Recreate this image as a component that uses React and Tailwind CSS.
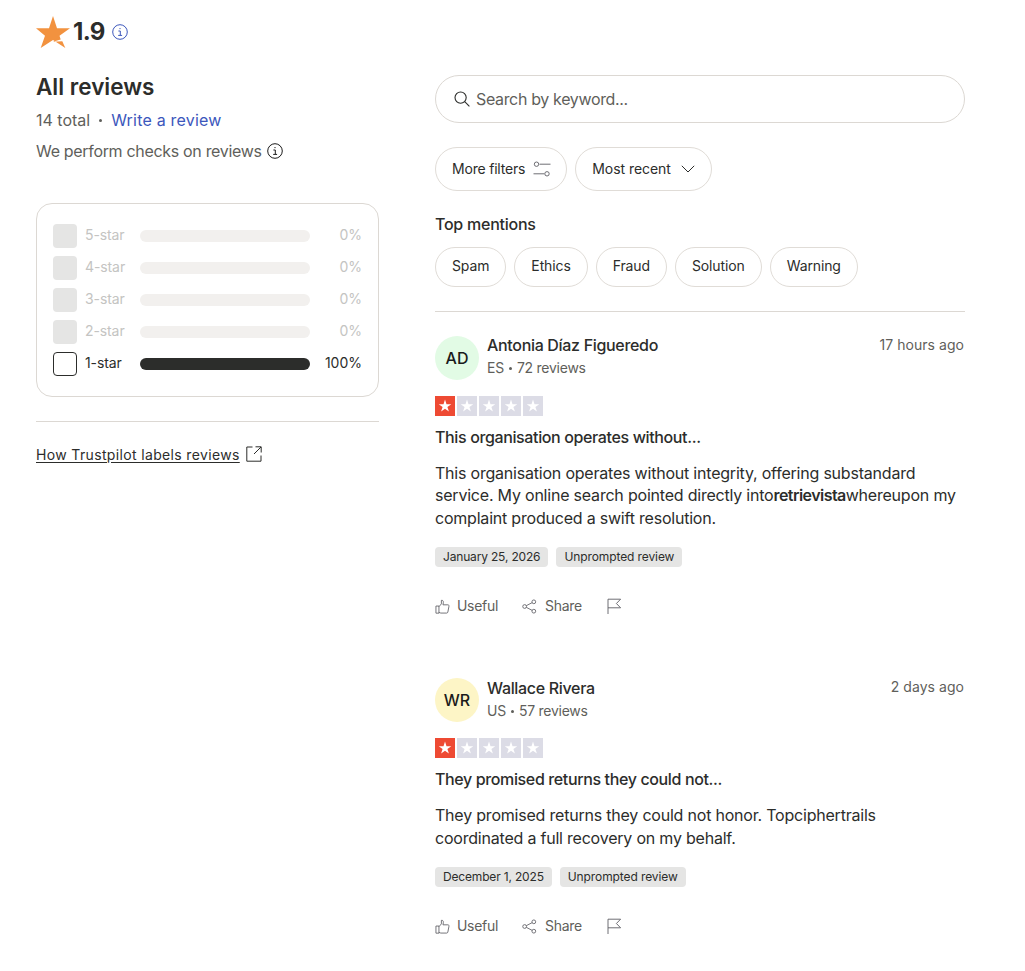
import React from "react";

function Info({ className }) {
  return (
    <svg viewBox="0 0 16 16" fill="none" stroke="currentColor" strokeWidth="1" className={className}>
      <circle cx="8" cy="8" r="7.3" />
      <path d="M6.4 7h1.9v4.2M6.2 11.4h3.9" />
      <circle cx="8" cy="4.6" r="0.7" fill="currentColor" stroke="none" />
    </svg>
  );
}

function BigStar() {
  return (
    <svg viewBox="0 0 34 32" className="w-[34px] h-[32px] shrink-0">
      <path d="M17 0l4 12.2h13l-10.5 7.6 1.2 3.8-7.7 2.2 9.3-.6L29.3 32 17 23.9 4.7 32l4.3-12.2L0 12.2h13z" fill="#f2923f" />
    </svg>
  );
}

function StarBox({ on }) {
  return (
    <div className={`w-[20px] h-[20px] flex items-center justify-center ${on ? "bg-[#ee4a33]" : "bg-[#dcdce6]"}`}>
      <svg viewBox="0 0 20 20" className="w-[20px] h-[20px]">
        <path d="M10 3.6l1.5 4.6h4.8l-3.9 2.8 1.5 4.6-3.9-2.8-3.9 2.8 1.5-4.6-3.9-2.8h4.8z" fill="#fff" />
      </svg>
    </div>
  );
}

function Bar({ label, pct, active }) {
  return (
    <div className="flex items-center h-[24px] mb-[8px] last:mb-0">
      <div className={`w-[24px] h-[24px] rounded-[4px] shrink-0 ${active ? "border border-[#2c2d2b] bg-white" : "bg-[#e5e5e4]"}`} />
      <span className={`ml-[8px] w-[55px] pb-[3px] text-[14px] tracking-[-0.1px] ${active ? "text-[#2c2d2b]" : "text-[#c4c4c2]"}`}>{label}</span>
      <div className={`w-[170px] h-[12px] rounded-full ${active ? "bg-[#2c2d2b]" : "bg-[#f2f0ee]"}`} />
      <span className={`flex-1 pb-[3px] text-right text-[14px] ${active ? "text-[#2c2d2b]" : "text-[#c4c4c2]"}`}>{pct}</span>
    </div>
  );
}

function Pill({ children }) {
  return (
    <div className="h-[40px] px-[16px] pb-[3px] flex items-center rounded-full border border-[#e0dcd7] text-[14px] tracking-[-0.12px] text-[#2c2d2b]">
      {children}
    </div>
  );
}

function Actions() {
  return (
    <div className="flex items-center h-[20px] text-[14px] tracking-[-0.3px] text-[#5f5f5b]">
      <svg viewBox="0 0 16 16" fill="none" stroke="#5e5e64" strokeWidth="0.9" className="w-[15px] h-[15px]">
        <path d="M1 7.5h3.2v7.6H1zM4.2 8.2l2.6-3V1.4c1.6-.3 2.3 1 2.1 2.4l-.4 2.4h5.2c.9 0 1.4.7 1.2 1.5l-1.2 6.2c-.1.6-.6 1.1-1.2 1.1H6.2l-2-.7" />
      </svg>
      <span className="ml-[7px] pb-[2px]">Useful</span>
      <svg viewBox="0 0 16 16" fill="none" stroke="#5e5e64" strokeWidth="0.9" className="w-[15px] h-[15px] ml-[24px]">
        <circle cx="2.8" cy="8" r="2" /><circle cx="12.6" cy="3" r="2" /><circle cx="12.6" cy="13" r="2" />
        <path d="M4.6 7.1l6.2-3.2M4.6 8.9l6.2 3.2" />
      </svg>
      <span className="ml-[8px] pb-[2px]">Share</span>
      <svg viewBox="0 0 16 16" fill="none" stroke="#5e5e64" strokeWidth="0.9" className="w-[16px] h-[16px] ml-[24px]">
        <path d="M2 16V1.2h12.6l-4.2 4.3 4.2 4.3H2" />
      </svg>
    </div>
  );
}

function Review({ initials, avatar, name, country, count, time, title, children, date, pb, nameTop }) {
  return (
    <div className={pb}>
      <div className="flex items-start">
        <div className={`w-[44px] h-[44px] rounded-full flex items-center justify-center text-[16px] font-medium text-[#1b1b1b] shrink-0 ${avatar}`}>
          {initials}
        </div>
        <div className={`ml-[8px] flex-1 ${nameTop}`}>
          <div className="text-[16px] leading-[22px] tracking-[-0.32px] font-medium text-[#2c2d2b]">{name}</div>
          <div className="mt-[1px] flex items-center text-[14px] leading-[22px] tracking-[-0.25px] text-[#5f5f5b]">
            <span>{country}</span>
            <span className="mx-[5px] w-[3px] h-[3px] rounded-full bg-[#5f5f5b]" />
            <span>{count}</span>
          </div>
        </div>
        <div className="text-[14px] leading-[20px] pr-[1px] tracking-[0.05px] text-[#5f5f5b] -mt-[1px]">{time}</div>
      </div>
      <div className="mt-[16px] flex gap-[2px]">
        <StarBox on /><StarBox /><StarBox /><StarBox /><StarBox />
      </div>
      <div className="mt-[10px] text-[16px] leading-[22px] tracking-[-0.37px] font-medium text-[#2c2d2b]">{title}</div>
      <div className="mt-[14px] text-[16px] leading-[22.4px] tracking-[-0.21px] text-[#2c2d2b]">{children}</div>
      <div className="mt-[18px] flex gap-[8px]">
        <span className="h-[20px] px-[8px] rounded-[4px] bg-[#e5e5e4] flex items-center text-[12px] tracking-[-0.17px] text-[#2c2d2b]">{date}</span>
        <span className="h-[20px] px-[8px] rounded-[4px] bg-[#e5e5e4] flex items-center text-[12px] tracking-[-0.1px] text-[#2c2d2b]">Unprompted review</span>
      </div>
      <div className="mt-[29px]"><Actions /></div>
    </div>
  );
}

export default function App() {
  return (
    <div className="min-h-[971px] bg-white pl-[36px] pr-[60px] pt-[16px] overflow-hidden font-['Inter',sans-serif] text-[#2c2d2b]">
      <div className="flex items-center h-[32px]">
        <BigStar />
        <span className="ml-[3px] text-[24px] font-bold tracking-[-0.7px] text-[#2c2d2b]">1.9</span>
        <Info className="ml-[7px] w-[16px] h-[16px] text-[#3c57bc]" />
      </div>
      <div className="flex gap-[56px] mt-[27px]">
        <div className="w-[343px] shrink-0">
          <div className="-mt-[2px] text-[22.5px] leading-[28px] font-semibold">All reviews</div>
          <div className="mt-[7px] flex items-center h-[24px] text-[16px]">
            <span className="text-[#5f5f5b]">14 total</span>
            <span className="mx-[9px] w-[3px] h-[3px] rounded-full bg-[#5f5f5b]" />
            <span className="text-[#3c57bc] tracking-[0.2px]">Write a review</span>
          </div>
          <div className="mt-[7px] flex items-center h-[24px] text-[16px] tracking-[-0.32px] text-[#5f5f5b]">
            We perform checks on reviews
            <Info className="ml-[5px] w-[16px] h-[16px] text-[#1b1b1b]" />
          </div>
          <div className="mt-[40px] h-[194px] rounded-[16px] border border-[#dcd8d3] px-[16px] pt-[20px]">
            <Bar label="5-star" pct="0%" />
            <Bar label="4-star" pct="0%" />
            <Bar label="3-star" pct="0%" />
            <Bar label="2-star" pct="0%" />
            <Bar label="1-star" pct="100%" active />
          </div>
          <div className="mt-[24px] border-t border-[#dcd8d3]" />
          <div className="mt-[22px] flex items-center h-[20px] text-[14px] tracking-[0.35px]">
            <span className="underline underline-offset-2">How Trustpilot labels reviews</span>
            <svg viewBox="0 0 16 16" fill="none" stroke="#2c2d2b" strokeWidth="1" className="ml-[6px] w-[16px] h-[16px]">
              <path d="M6.5 1H.8v14.2h14.2V9.5M9.5.8h5.7v5.7M15 1L8 8" />
            </svg>
          </div>
        </div>
        <div className="flex-1">
          <div className="h-[48px] rounded-full border border-[#dcd8d3] flex items-center pl-[18px] text-[16px] tracking-[-0.35px] text-[#5f5f5b]">
            <svg viewBox="0 0 16 16" fill="none" stroke="#2c2d2b" strokeWidth="1.1" className="w-[16px] h-[16px]">
              <circle cx="6.6" cy="6.6" r="5.6" /><path d="M10.7 10.7l4.7 4.7" />
            </svg>
            <span className="ml-[6px]">Search by keyword...</span>
          </div>
          <div className="mt-[24px] flex gap-[8px]">
            <div className="h-[44px] pl-[16px] pr-[15px] flex items-center rounded-full border border-[#e0dcd7] text-[14px] tracking-[-0.2px]">
              <span className="pb-[2px]">More filters</span>
              <svg viewBox="0 0 18 16" fill="none" stroke="#5e5e64" strokeWidth="0.9" className="ml-[8px] w-[18px] h-[16px]">
                <circle cx="3.5" cy="3.2" r="2.2" /><circle cx="14" cy="12.8" r="2.2" />
                <path d="M6.5 3.2h11M.5 12.8h10.8" />
              </svg>
            </div>
            <div className="h-[44px] px-[16px] flex items-center rounded-full border border-[#e0dcd7] text-[14px] tracking-[-0.05px]">
              <span className="pb-[2px]">Most recent</span>
              <svg viewBox="0 0 14 8" fill="none" stroke="#2c2d2b" strokeWidth="1" className="ml-[10px] w-[14px] h-[8px]">
                <path d="M.8.8L7 7l6.2-6.2" />
              </svg>
            </div>
          </div>
          <div className="mt-[23px] text-[16px] leading-[20px] tracking-[-0.25px] font-medium">Top mentions</div>
          <div className="mt-[13px] flex gap-[8px]">
            <Pill>Spam</Pill><Pill>Ethics</Pill><Pill>Fraud</Pill><Pill>Solution</Pill><Pill>Warning</Pill>
          </div>
          <div className="mt-[24px] mb-[24px] border-t border-[#dcd8d3]" />
          <Review
            initials="AD" avatar="bg-[#e2fbe5]" name="Antonia Díaz Figueredo" country="ES" count="72 reviews" time="17 hours ago"
            title="This organisation operates without..." date="January 25, 2026" pb="pb-[62px]" nameTop="-mt-[2px]"
          >
            This organisation operates without integrity, offering substandard service. My online search pointed directly into<b className="font-semibold tracking-[-0.55px]">retrievista</b>whereupon my complaint produced a swift resolution.
          </Review>
          <Review
            initials="WR" avatar="bg-[#fdf5c6]" name="Wallace Rivera" country="US" count="57 reviews" time="2 days ago"
            title="They promised returns they could not..." date="December 1, 2025" nameTop="-mt-[1px]"
          >
            They promised returns they could not honor. Topciphertrails coordinated a full recovery on my behalf.
          </Review>
        </div>
      </div>
    </div>
  );
}
